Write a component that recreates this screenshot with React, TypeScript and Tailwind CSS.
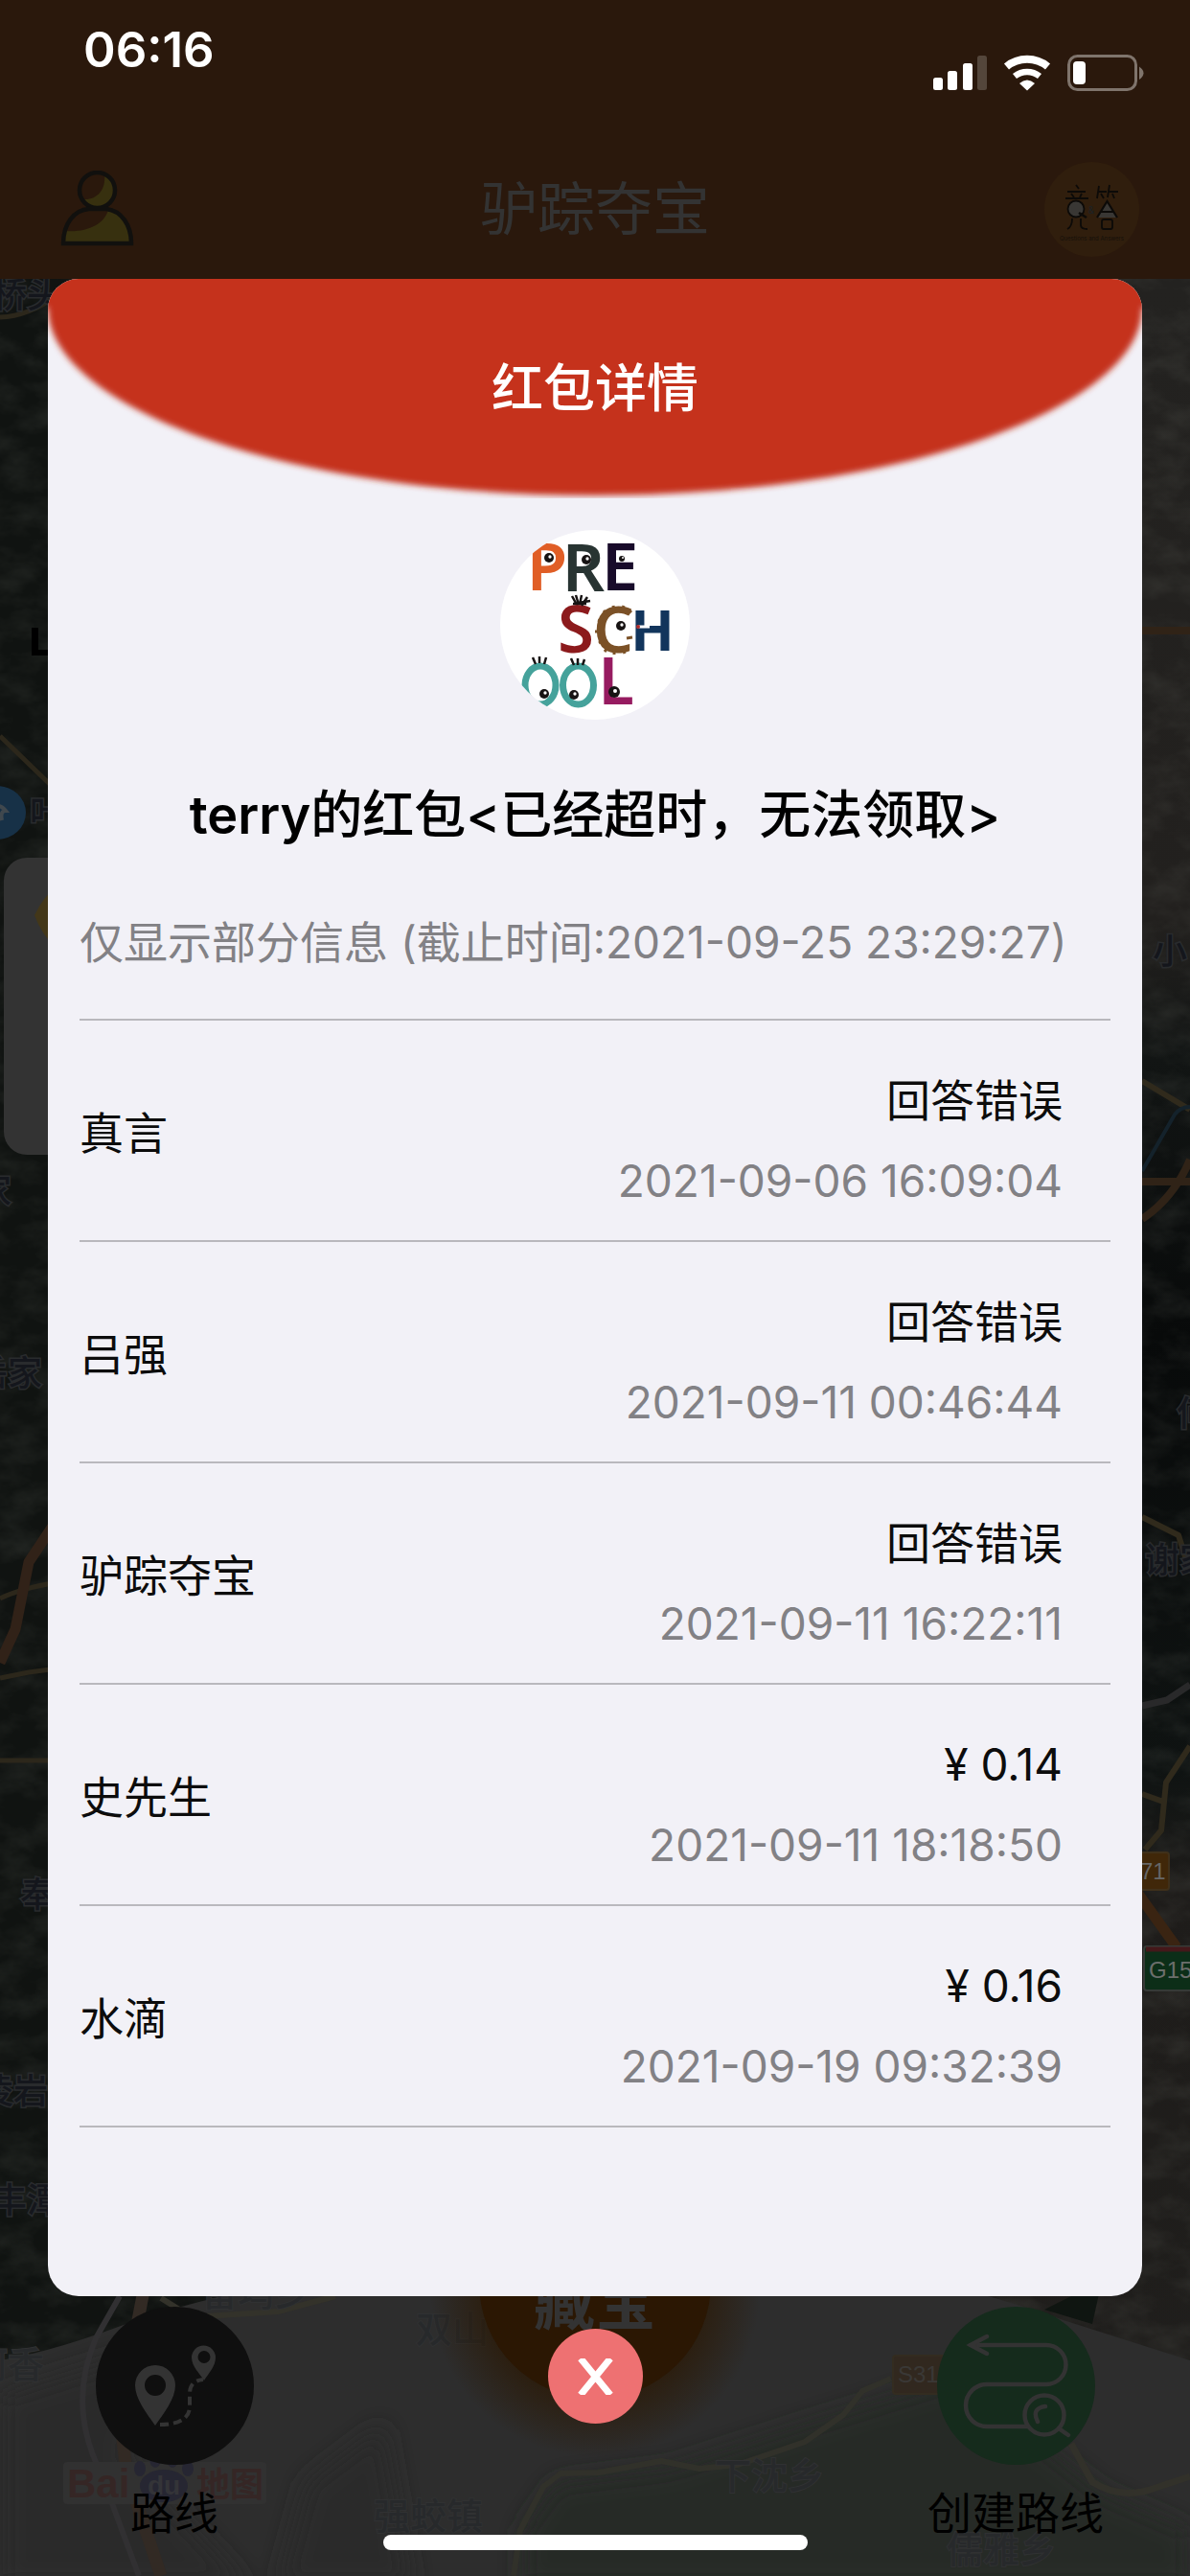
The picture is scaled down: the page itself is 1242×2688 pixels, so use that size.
import React from "react";

interface ClaimRecord {
  name: string;
  result: string;
  time: string;
}

const records: ClaimRecord[] = [
  { name: "真言", result: "回答错误", time: "2021-09-06 16:09:04" },
  { name: "吕强", result: "回答错误", time: "2021-09-11 00:46:44" },
  { name: "驴踪夺宝", result: "回答错误", time: "2021-09-11 16:22:11" },
  { name: "史先生", result: "¥ 0.14", time: "2021-09-11 18:18:50" },
  { name: "水滴", result: "¥ 0.16", time: "2021-09-19 09:32:39" },
];

function StatusIcons() {
  return (
    <svg width="224" height="40" viewBox="0 0 224 40" aria-hidden="true">
      <rect x="1" y="25" width="10" height="13" rx="2.5" fill="#fff" />
      <rect x="16" y="18" width="10" height="20" rx="2.5" fill="#fff" />
      <rect x="32" y="10" width="10" height="28" rx="2.5" fill="#fff" />
      <rect x="47" y="2" width="10" height="36" rx="2.5" fill="#54463b" />
      <g fill="none" stroke="#fff">
        <path d="M77.500 13.500 A34 34 0 0 1 120.500 13.500" strokeWidth="8" />
        <path d="M86 23.500 A21 21 0 0 1 112 23.500" strokeWidth="6.500" />
      </g>
      <path d="M91 31 Q99 24 107 31 L99 38.500Z" fill="#fff" />
      <rect x="142.500" y="2.500" width="70" height="35" rx="9" fill="none" stroke="#7f746c" strokeWidth="3" />
      <rect x="147" y="8" width="13" height="24" rx="4" fill="#fff" />
      <path d="M216 13.500 Q225 20 216 27Z" fill="#7f746c" />
    </svg>
  );
}

function UserIcon() {
  return (
    <svg width="78" height="80" viewBox="0 0 78 80" aria-hidden="true">
      <path d="M3 76 C3 56 14 40 30 39 H48 C64 42 74 57 74 76Z" fill="#2a180c" />
      <path d="M50 41 C65 44 74 58 74 76 H4 V63 C28 65 46 56 50 41Z" fill="#37300f" />
      <path d="M46 4 C63 12 62 38 39 39 C31 39 26 36 24 30 C38 31 48 20 46 4Z" fill="#37300f" />
      <g fill="none" stroke="#11100e" strokeWidth="4.500">
        <circle cx="38.500" cy="20.500" r="18.500" />
        <path d="M3 76 C3 56 14 41 30 40 H48 C64 42 74 57 74 76Z" />
      </g>
    </svg>
  );
}

function QuizBadge() {
  return (
    <svg width="99" height="99" viewBox="0 0 99 99" role="img" aria-label="竞答">
      <circle cx="49.500" cy="49.500" r="49.500" fill="#301e0d" />
      <g fill="none" stroke="#0c0a08" strokeWidth="1.800">
        <path d="M33 24l3 4M24 31h19M28 33l3 4M39 33l-2 4M22 38h24" />
        <path d="M57 25l-2 13M56 31h9M59 33l3 5M68 24l-2 13M67 31h10M71 33l2 5" />
        <path d="M29 59c0 6-1 9-5 11M38 59v7q0 4 7 4" />
        <rect x="60" y="60" width="11" height="10" rx="2" />
        <circle cx="33" cy="49" r="8.500" fill="#393734" />
        <path d="M36 53l8 5" strokeWidth="2.600" />
        <path d="M55 58L65.500 41L76 58M59 52H72" fill="#393734" strokeWidth="2.200" />
      </g>
      <text x="49" y="54" textAnchor="middle" fontSize="10" fill="#1b2226">&amp;</text>
      <text x="49.500" y="82" textAnchor="middle" fontSize="6" fill="#15100a">
        Questions and Answers
      </text>
    </svg>
  );
}

function Eye({ x, y, r = 5 }: { x: number; y: number; r?: number }) {
  return (
    <g>
      <circle cx={x} cy={y} r={r} fill="#171313" />
      <circle cx={x + 1} cy={y - 1} r={r / 3} fill="#fff" />
    </g>
  );
}

function Avatar() {
  return (
    <svg
      className="mt-[33px] h-[198px] w-[198px] rounded-full bg-white"
      viewBox="0 0 198 198"
      role="img"
      aria-label="PRE SCHOOL"
    >
      <g textAnchor="middle" fontFamily="'Noto Sans', sans-serif" fontWeight="600" fontSize="69">
        <text x="49" y="63" fill="#e05e26">P</text>
        <text x="87" y="64" fill="#283432">R</text>
        <text x="125" y="63" fill="#180b2a">E</text>
        <text x="79" y="128" fill="#8c1a1c">S</text>
        <text x="118" y="128" fontSize="66" fill="#7b5127">C</text>
        <text x="159" y="126" fontSize="60" fontWeight="700" fill="#12355c">H</text>
        <text x="121" y="182" fill="#961b60">L</text>
      </g>
      <g fill="none" stroke="#45a29b" strokeWidth="7">
        <ellipse cx="42" cy="162" rx="16" ry="20" />
        <ellipse cx="81.500" cy="162" rx="16" ry="20" />
      </g>
      <g stroke="#171313" strokeWidth="2.500" fill="none">
        <path d="M34 133l3 7M41 132v7M48 133l-2 7M74 134l3 7M81 134v7M88 135l-2 6" />
        <path d="M75 69l5 9M79 68l3 10M85 68l-2 10M91 70l-6 9M94 74l-12 2M76 77h14" />
      </g>
      <g stroke="#7b5127" strokeWidth="3">
        <path d="M99 106h6M102 94l5 2M108 84l4 5M118 79l1 6M129 79l-2 6M137 84l-4 4M103 118l5-3M109 127l4-5M119 130v-6M130 129l-2-6M138 112l-6 1" />
      </g>
      <path d="M143 101h13" stroke="#fff" strokeWidth="3" />
      <circle cx="144" cy="101" r="2" fill="#b02a2a" />
      <Eye x={51} y={29} />
      <Eye x={90} y={31} />
      <Eye x={127} y={30} r={3} />
      <Eye x={126} y={100} />
      <Eye x={46} y={171} />
      <Eye x={77} y={172} />
      <Eye x={119} y={169} r={6} />
    </svg>
  );
}

// Dimmed satellite map behind the dialog
function MapCanvas() {
  return (
    <svg
      className="absolute inset-0 h-full w-full"
      viewBox="0 291 1242 2397"
      preserveAspectRatio="xMidYMin slice"
      aria-hidden="true"
    >
      <defs>
        <filter id="terrain" x="0" y="0" width="100%" height="100%">
          <feTurbulence type="fractalNoise" baseFrequency="0.025 0.04" numOctaves="4" seed="7" />
          <feColorMatrix values="0 0 0 0 0.2  0 0 0 0 0.21  0 0 0 0 0.18  1.600 0 0 0 -0.600" />
        </filter>
        <filter id="haze">
          <feGaussianBlur stdDeviation="12" />
        </filter>
        <linearGradient id="east" x1="0" y1="0" x2="0" y2="1">
          <stop offset="0" stopColor="#232220" />
          <stop offset="0.280" stopColor="#22201e" />
          <stop offset="0.340" stopColor="#121514" />
          <stop offset="0.460" stopColor="#080a0a" />
          <stop offset="0.650" stopColor="#0f1312" />
          <stop offset="0.700" stopColor="#1e1c1a" />
          <stop offset="1" stopColor="#201f1d" />
        </linearGradient>
        <radialGradient id="glow">
          <stop offset="0.650" stopColor="#2b1803" stopOpacity="0.700" />
          <stop offset="1" stopColor="#2b1803" stopOpacity="0" />
        </radialGradient>
      </defs>
      <rect y="291" width="1242" height="2397" fill="#101311" />
      <rect x="621" y="291" width="621" height="2397" fill="url(#east)" />
      <rect y="291" width="1242" height="2397" filter="url(#terrain)" opacity="0.180" />
      <path d="M0 2463 Q60 2453 150 2418 Q400 2345 620 2345 Q900 2345 1110 2421 L1242 2463 V2688 H0Z" fill="#2d2d2d" />
      <path d="M1090 2410L1150 2380L1140 2425Z" fill="#0f1511" />
      <g filter="url(#haze)">
        <path d="M0 2500 Q120 2460 200 2440 L130 2560 L260 2700 H0Z" fill="#2b2c2a" />
        <path d="M545 2700 V2640 L580 2590 L700 2575 L840 2530 L1000 2480 L1150 2600 L1242 2640 V2700Z" fill="#272927" />
        <path d="M290 2700 L320 2590 L400 2530 L430 2700Z" fill="#292a29" />
      </g>
      <g fill="none" strokeLinejoin="round">
        <path d="M0 331 Q30 330 60 308M0 768 L60 826M0 1668 Q20 1658 60 1651M0 1751 L30 1745 L60 1741M0 1837H60" stroke="#2c271b" strokeWidth="5" />
        <path d="M0 1735 L16 1700 L30 1630 L60 1585" stroke="#312218" strokeWidth="11" />
        <path d="M1192 658H1242M1192 1233H1242M1192 1272 Q1225 1250 1242 1210" stroke="#302317" strokeWidth="8" />
        <path d="M1192 1128L1242 1158M1192 1583L1230 1602L1242 1640M1242 1822L1217 1860L1212 1910L1195 1930M1192 1872L1214 1880" stroke="#302a1c" strokeWidth="6" />
        <path d="M1192 1222L1226 1163Q1232 1155 1242 1155" stroke="#14222b" strokeWidth="4" />
        <path d="M1192 1780L1218 1774L1242 1758" stroke="#29292a" strokeWidth="7" />
        <path d="M1185 1972L1228 2032" stroke="#3a2412" strokeWidth="11" />
        <path d="M125 2396L100 2440Q70 2510 105 2580L145 2688" stroke="#313032" strokeWidth="6" />
        <path d="M150 2390L125 2520L132 2580L168 2688" stroke="#322a24" strokeWidth="13" />
        <path d="M168 2398L200 2418L290 2412L350 2396" stroke="#33322a" strokeWidth="6" />
        <path d="M536 2688L543 2640L567 2595L585 2581L625 2580L690 2568L730 2576L770 2572L840 2548L880 2520L900 2495L930 2482" stroke="#31312a" strokeWidth="6" />
        <path d="M1118 2550L1140 2590Q1170 2608 1200 2598L1242 2584" stroke="#32312a" strokeWidth="7" />
      </g>
      <g
        fontFamily="'Noto Sans CJK SC', sans-serif"
        fontWeight="500"
        fontSize="36"
        fill="#14161c"
        stroke="#292b2d"
        strokeWidth="3"
        paintOrder="stroke"
      >
        <text x="-8" y="321">桥头</text>
        <text x="31" y="861">叶</text>
        <text x="-24" y="1256">家</text>
        <text x="-28" y="1446">岳家</text>
        <text x="21" y="1990">奉</text>
        <text x="-22" y="2195">凌岩</text>
        <text x="-8" y="2309">丰潭</text>
        <text x="1203" y="1006">小</text>
        <text x="1228" y="1488">何</text>
        <text x="1195" y="1641">谢家</text>
      </g>
      <g
        fontFamily="'Noto Sans CJK SC', sans-serif"
        fontWeight="500"
        fontSize="38"
        fill="#27292b"
        stroke="#303132"
        strokeWidth="2"
        paintOrder="stroke"
      >
        <text x="-30" y="2481">河香</text>
        <text x="210" y="2406">留坞乡</text>
        <text x="434" y="2444">双山</text>
        <text x="390" y="2639">强蛟镇</text>
        <text x="746" y="2597">下沈乡</text>
        <text x="988" y="2674">儒雅乡</text>
      </g>
      <ellipse cx="-3" cy="848" rx="30" ry="28" fill="#173147" />
      <path d="M-10 846q8-10 16 0q-6 0-4 10" fill="none" stroke="#40484e" strokeWidth="4" />
      <path d="M33 655h7v23h20v6H33Z" fill="#000" />
      <rect x="4" y="895" width="240" height="310" rx="24" fill="#333" />
      <path d="M60 925Q46 934 36 955Q44 977 60 990Z" fill="#433719" />
      <g fontFamily="'Liberation Sans', sans-serif" fontSize="24">
        <rect x="1150" y="1933" width="70" height="39" rx="3" fill="#402709" stroke="#3f301a" strokeWidth="2" />
        <text x="1190" y="1961" fill="#666">71</text>
        <rect x="1194" y="2031" width="90" height="46" rx="3" fill="#0c2e18" stroke="#363a37" strokeWidth="2" />
        <path d="M1196 2034h46" stroke="#45181a" strokeWidth="5" />
        <text x="1199" y="2064" fill="#6c6e6c">G15</text>
        <rect x="932" y="2458" width="80" height="40" rx="3" fill="#31281f" stroke="#332c20" strokeWidth="2" />
        <text x="937" y="2486" fill="#3a3836">S311</text>
      </g>
      <g fontWeight="700" fill="#352625">
        <rect x="66" y="2569" width="212" height="44" rx="4" fill="#313131" />
        <text x="70" y="2606" fontSize="42" fontFamily="'Liberation Sans', sans-serif">Bai</text>
        <g fill="#262632">
          <ellipse cx="146" cy="2576" rx="6" ry="8" />
          <ellipse cx="162" cy="2566" rx="6" ry="9" />
          <ellipse cx="180" cy="2566" rx="6" ry="9" />
          <ellipse cx="196" cy="2576" rx="6" ry="8" />
          <ellipse cx="171" cy="2594" rx="25" ry="17" />
        </g>
        <text x="154" y="2603" fontSize="28" fontFamily="'Liberation Sans', sans-serif" fill="#343438">du</text>
        <text x="205" y="2605" fontSize="35" fontFamily="'Noto Sans CJK SC', sans-serif">地图</text>
      </g>
      <circle cx="621" cy="2392" r="172" fill="url(#glow)" />
    </svg>
  );
}

function RouteIcon() {
  return (
    <svg width="165" height="165" viewBox="0 0 165 165" aria-hidden="true">
      <circle cx="82.500" cy="82.500" r="82.500" fill="#0f0f0f" />
      <path
        fillRule="evenodd"
        fill="#333"
        d="M62 124C53 111 41 96 41 82a21 21 0 0 1 42 0C83 96 71 111 62 124ZM62 71a11 11 0 1 0 0 22a11 11 0 0 0 0-22Z"
      />
      <path
        fillRule="evenodd"
        fill="#333"
        d="M113 77C108 69 100 62 100 53a12.500 12.500 0 0 1 25 0C125 62 118 69 113 77ZM113 46a6.500 6.500 0 1 0 0 13a6.500 6.500 0 0 0 0-13Z"
      />
      <path
        d="M67 123C88 123 98 116 98 104V91C98 82 102 77 112 76"
        fill="none"
        stroke="#333"
        strokeWidth="4"
        strokeDasharray="9 5"
      />
    </svg>
  );
}

function CreateRouteIcon() {
  return (
    <svg width="165" height="165" viewBox="0 0 165 165" aria-hidden="true">
      <circle cx="82.500" cy="82.500" r="82.500" fill="#152b1c" />
      <g fill="none" stroke="#333" strokeWidth="4.500" strokeLinecap="round">
        <path d="M35 40H114A20.500 20.500 0 0 1 114 81H52A22 22 0 0 0 52 125H94" />
        <path d="M52 31L35 40L52 49" />
        <circle cx="112" cy="113" r="20.500" />
        <path d="M127 127L137 134M113 104Q98 106 105 120" />
      </g>
    </svg>
  );
}

function BottomNav() {
  return (
    <nav className="relative mt-auto flex items-end justify-between px-[90px] pb-[42px] text-[46px] leading-[48px] text-black">
      <button className="flex w-[184px] flex-col items-center gap-[26px]">
        <RouteIcon />
        <span>路线</span>
      </button>
      <button className="flex h-[242px] w-[242px] items-center justify-center self-start rounded-full bg-[#2b1703] pt-10 text-[64px] font-bold text-[#333]">
        藏宝
      </button>
      <button className="flex w-[184px] flex-col items-center gap-[26px] pt-[146px]">
        <CreateRouteIcon />
        <span className="whitespace-nowrap">创建路线</span>
      </button>
    </nav>
  );
}

function RedPacketDialog() {
  return (
    <section
      role="dialog"
      aria-labelledby="dialog-title"
      className="mx-[50px] flex flex-col items-center overflow-hidden rounded-[32px] bg-[#f2f1f7] pb-44"
    >
      <div className="relative flex h-[229px] w-full items-center justify-center">
        <svg
          className="absolute inset-0 h-full w-full"
          viewBox="0 0 1142 229"
          preserveAspectRatio="none"
          aria-hidden="true"
        >
          <defs>
            <filter id="soft" x="-5%" y="-20%" width="110%" height="140%">
              <feGaussianBlur stdDeviation="3" />
            </filter>
          </defs>
          <path
            d="M-20 -30H1162V30H1142C1142 136 886 226 571 226S0 136 0 30H-20Z"
            fill="#c5321f"
            filter="url(#soft)"
          />
        </svg>
        <h1 id="dialog-title" className="relative text-[54px] leading-[60px] font-medium text-white">
          红包详情
        </h1>
      </div>

      <Avatar />

      <h2 className="mt-16 text-[54px] leading-[72px] font-medium text-black">
        <span className="font-semibold">terry</span>的红包&lt;已经超时，无法领取&gt;
      </h2>

      <div className="mt-16 w-full px-[33px]">
        <p className="h-[114px] border-b-2 border-[#b9b8bd] text-[46px] leading-[64px] whitespace-nowrap text-[#828185]">
          仅显示部分信息 (截止时间:2021-09-25 23:29:27)
        </p>
        <ul>
          {records.map((record) => (
            <li
              key={record.time}
              className="flex h-[231px] items-center justify-between border-b-2 border-[#b9b8bd] pr-[50px] text-[46px] leading-[64px] text-[#0c0c0c]"
            >
              <span className="pt-1">{record.name}</span>
              <div className="flex flex-col gap-5 pt-5 text-right">
                <span>{record.result}</span>
                <time className="text-[#828185]">{record.time}</time>
              </div>
            </li>
          ))}
        </ul>
      </div>
    </section>
  );
}

export default function App() {
  return (
    <div className="relative flex min-h-screen flex-col bg-[#2a180c] font-['Inter','Noto_Sans_CJK_SC',sans-serif]">
      <header className="h-[291px]">
        <div className="flex h-[132px] items-start justify-between pt-5 pr-[45px] pl-[87px]">
          <span className="text-[51px] leading-[64px] font-semibold text-white">06:16</span>
          <span className="pt-9">
            <StatusIcons />
          </span>
        </div>
        <div className="flex h-[172px] items-center justify-between pr-[53px] pl-[63px]">
          <button aria-label="我的" className="w-[89px]">
            <UserIcon />
          </button>
          <span className="text-[60px] leading-[72px] text-[#333]">驴踪夺宝</span>
          <button aria-label="竞答">
            <QuizBadge />
          </button>
        </div>
      </header>

      <main className="relative flex flex-1 flex-col">
        <MapCanvas />
        <BottomNav />
      </main>

      <div className="absolute inset-0 flex flex-col pt-[291px]">
        <RedPacketDialog />
        <button
          aria-label="关闭"
          className="mx-auto mt-[34px] flex h-[99px] w-[99px] items-center justify-center rounded-full bg-[#ee7172]"
        >
          <svg width="39" height="38" viewBox="0 0 39 38" aria-hidden="true">
            <path d="M4 0L35 38M35 0L4 38" stroke="#fff" strokeWidth="7" />
          </svg>
        </button>
        <div className="mx-auto mt-auto mb-[27px] h-4 w-[443px] rounded-full bg-white"></div>
      </div>
    </div>
  );
}
